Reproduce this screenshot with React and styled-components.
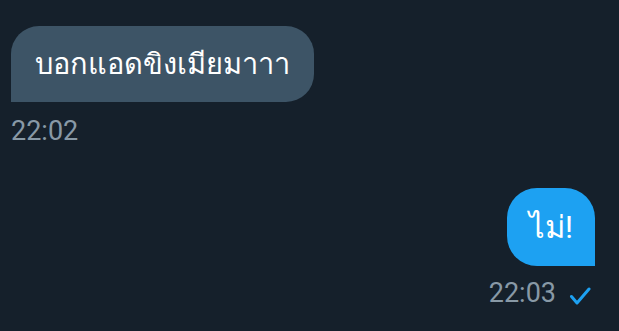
import React from 'react';
import styled, { createGlobalStyle } from 'styled-components';

const GlobalStyle = createGlobalStyle`
  html, body {
    margin: 0;
    padding: 0;
    background: #15202b;
  }
  body {
    font-family: Roboto, "Noto Sans", "DejaVu Sans", sans-serif;
  }
`;

const Thread = styled.div`
  width: 619px;
  height: 331px;
  box-sizing: border-box;
  padding: 26px 24px 0 11px;
  display: flex;
  flex-direction: column;
`;

const Group = styled.div`
  display: flex;
  flex-direction: column;
  align-items: ${p => (p.$mine ? 'flex-end' : 'flex-start')};
  margin-top: ${p => p.$gap || 0}px;
`;

const Bubble = styled.div`
  box-sizing: border-box;
  height: ${p => p.$h}px;
  padding: 0 ${p => p.$px}px;
  display: flex;
  align-items: center;
  color: #ffffff;
  font-size: ${p => p.$fs}px;
  background: ${p => (p.$mine ? '#1da1f2' : '#3d5466')};
  border-radius: ${p => (p.$mine ? '30px 30px 0 30px' : '28px 28px 28px 0')};
`;

const Meta = styled.div`
  display: flex;
  align-items: center;
  gap: 13px;
  margin-top: ${p => p.$mt}px;
  margin-right: ${p => p.$mr || 0}px;
  color: #8899a6;
  font-size: 27px;
  line-height: 30px;
`;

const CheckIcon = styled.svg`
  margin-top: 6px;
`;

const Check = () => (
  <CheckIcon width="22" height="18" viewBox="0 0 22 18" fill="none" stroke="#1da1f2" strokeWidth="3" strokeLinecap="round" strokeLinejoin="round">
    <path d="M2.5 9.5l5.5 6.5L20 2" />
  </CheckIcon>
);

export default function App() {
  return (
    <>
      <GlobalStyle />
      <Thread>
        <Group>
          <Bubble $h={76} $px={24} $fs={29}>บอกแอดขิงเมียมาาา</Bubble>
          <Meta $mt={14}>22:02</Meta>
        </Group>
        <Group $mine $gap={42}>
          <Bubble $mine $h={78} $px={22} $fs={31}>ไม่!</Bubble>
          <Meta $mt={12} $mr={4}>22:03 <Check /></Meta>
        </Group>
      </Thread>
    </>
  );
}
